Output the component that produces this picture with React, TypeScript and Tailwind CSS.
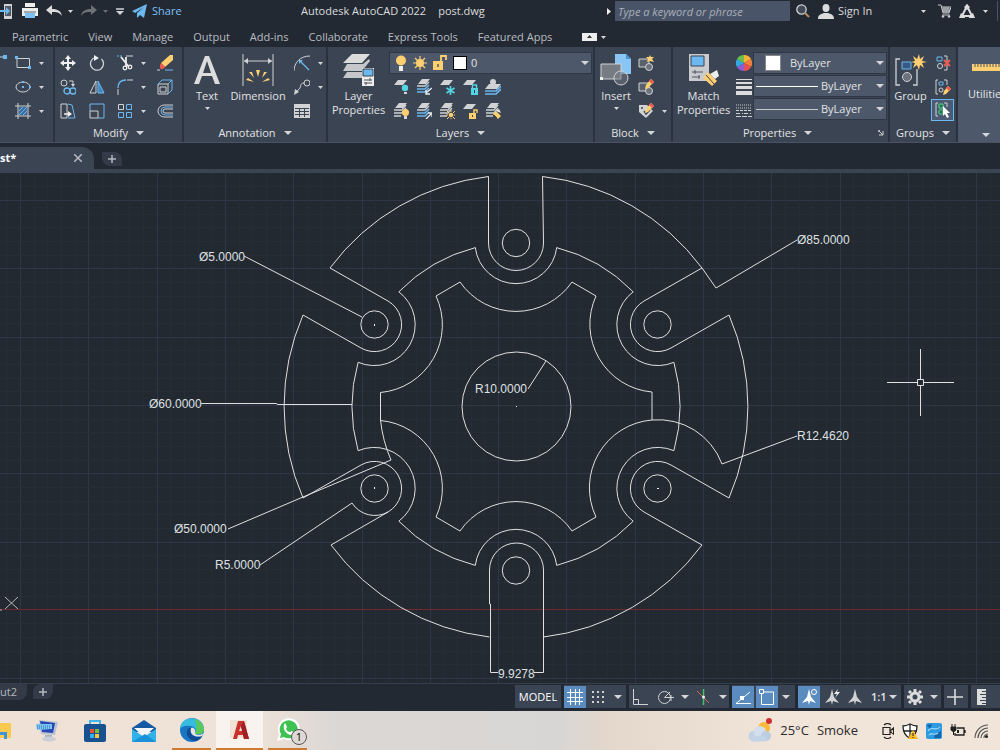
import React from 'react';

type IconProps = { w?: number; h?: number; className?: string; children: React.ReactNode };

const Icon: React.FC<IconProps> = ({ w = 16, h = 16, className = '', children }) => (
  <svg width={w} height={h} viewBox={`0 0 ${w} ${h}`} fill="none" className={`shrink-0 ${className}`} aria-hidden="true">
    {children}
  </svg>
);

const Caret: React.FC<{ small?: boolean; className?: string }> = ({ small, className = '' }) => (
  <Icon w={small ? 5 : 8} h={small ? 3 : 4} className={className}>
    <path d={small ? 'M0 0H5L2.5 3Z' : 'M0 0H8L4 4Z'} fill="#d4d6d9" />
  </Icon>
);

const G = '#d0d2d4';
const B = '#6cb8f0';
const Y = '#ffcf70';

const ribbonTabs = ['Parametric', 'View', 'Manage', 'Output', 'Add-ins', 'Collaborate', 'Express Tools', 'Featured Apps'];

const drawTools = [
  {
    name: 'Rectangle',
    icon: <><path d="M2 3.500H14.500V12.500H2Z" stroke={G} /><path d="M0 1H3V4H0ZM13 11H16V14H13Z" fill={B} /></>,
  },
  {
    name: 'Ellipse',
    icon: <><ellipse cx="8" cy="8" rx="7" ry="5" stroke={G} /><path d="M7 7H9V9H7ZM7 2H9V4H7ZM14 7H16V9H14Z" fill={B} /></>,
  },
  {
    name: 'Hatch',
    icon: <><path d="M3 0V16M13 0V16M0 3H16M0 13H16" stroke={G} /><path d="M4 4H12V12H4Z" fill="#3d6d9c" /><path d="M4 8L8 4M4 12L12 4M8 12L12 8" stroke={B} /></>,
  },
];

const modifyTools = [
  {
    name: 'Move',
    icon: <><path d="M8 2V14M2 8H14" stroke="#eee" strokeWidth="2" /><path d="M8 0L11 4H5ZM8 16L11 12H5ZM0 8L4 5V11ZM16 8L12 5V11Z" fill="#eee" /></>,
  },
  {
    name: 'Rotate',
    icon: <><path d="M12.500 4A6.500 6.500 0 1 1 6 2.500" stroke={G} strokeWidth="1.3" /><path d="M5 0L10 3L5 6Z" fill="#eee" /></>,
  },
  {
    name: 'Trim',
    more: true,
    icon: <><path d="M0 1H6" stroke={B} strokeDasharray="2 1" /><path d="M9 1H16" stroke={G} /><path d="M4 2L12 12M9 2V12" stroke="#eee" strokeWidth="1.8" /><circle cx="8" cy="13" r="1.8" stroke="#eee" strokeWidth="1.3" /><circle cx="13" cy="12" r="1.8" stroke="#eee" strokeWidth="1.3" /></>,
  },
  {
    name: 'Erase',
    icon: <><path d="M16 0V5L8 12L4 8L13 0Z" fill={Y} /><path d="M4 8L8 12C6 15 3 15 3 12C3 10 3 9 4 8Z" fill="#ee5a50" /><path d="M0 15H3" stroke={G} /><path d="M8 15H16" stroke={B} /></>,
  },
  {
    name: 'Copy',
    icon: <><circle cx="4" cy="4" r="3" stroke={G} /><path d="M9 2H13V6" stroke={G} /><path d="M11 5H15L13 8Z" fill={G} /><circle cx="7" cy="12" r="3" stroke={B} strokeWidth="1.3" /><circle cx="13" cy="12" r="3" stroke={B} strokeWidth="1.3" /></>,
  },
  {
    name: 'Mirror',
    icon: <><path d="M7 2V14H1Z" stroke={G} /><path d="M9 2V14H15Z" fill="#4386bd" stroke={B} /></>,
  },
  {
    name: 'Fillet',
    more: true,
    icon: <><path d="M1 16V10M10 1H16" stroke={G} /><path d="M1 9C1 4 4 1 9 1" stroke={B} strokeWidth="1.3" /></>,
  },
  {
    name: 'Explode',
    icon: <><path d="M1 5H11V15H1ZM3 8H9V13H3Z" stroke={G} /><path d="M1 5L5 1H15V11L11 15M11 5L15 1" stroke={B} /></>,
  },
  {
    name: 'Stretch',
    icon: <><path d="M1 1H7V15H1Z" stroke={G} /><path d="M8 1L12 2L15 15H8" stroke={B} /><path d="M4 11H9" stroke="#eee" strokeWidth="1.5" /><path d="M8 8L12 11L8 14Z" fill="#eee" /></>,
  },
  {
    name: 'Scale',
    icon: <><path d="M1 8V1H15V15H9" stroke={B} /><path d="M1 8H9V15H1Z" stroke={G} /></>,
  },
  {
    name: 'Array',
    more: true,
    icon: <><path d="M1.500 1.500H6.500V6.500H1.500Z" stroke={G} /><path d="M9.500 1.500H14.500V6.500H9.500ZM1.500 9.500H6.500V14.500H1.500ZM9.500 9.500H14.500V14.500H9.500Z" stroke={B} /></>,
  },
  {
    name: 'Offset',
    icon: <><path d="M16 2H7A6 6 0 0 0 7 14H16" stroke={G} /><path d="M16 4H8A4 4 0 0 0 8 12H16" stroke={B} /><path d="M16 6H8A2 2 0 0 0 8 10H16" stroke={G} /></>,
  },
];

const sheet = <path d="M5 1H14L10 6H1Z" fill={G} />;
const stack = <><path d="M6 0H14L10 5H2Z" fill={G} /><path d="M1 7H9L13 2M1 10H9L13 5M1 13H8" stroke={G} strokeWidth="1.3" /></>;
const stackBlue = <><path d="M6 0H14L10 5H2Z" fill={G} /><path d="M1 7H9L13 3" stroke={G} strokeWidth="1.3" /><path d="M1 10H9L13 6M1 13H9L13 9" stroke={B} strokeWidth="1.5" /></>;

const layerTools = [
  { name: 'Off', icon: <>{sheet}<circle cx="12" cy="9" r="3.2" fill="#54d5e4" /><path d="M11 13H14V15H11Z" fill={G} /></> },
  { name: 'Isolate', icon: <>{stackBlue}<path d="M16 9L10 14M10 11V15H14" stroke="#eee" strokeWidth="1.3" /></> },
  { name: 'Freeze', icon: <>{sheet}<path d="M11.500 7V16M7.500 9L15.500 14M7.500 14L15.500 9" stroke="#54d5e4" strokeWidth="1.6" /></> },
  { name: 'Lock', icon: <>{sheet}<path d="M9 9H16V16H9Z" fill="#54d5e4" /><path d="M10.500 9V6H14.500V9" stroke="#54d5e4" strokeWidth="1.4" /><path d="M12.500 11V14" stroke="#345" /></> },
  { name: 'Make Current', icon: <><path d="M4 5H16L12 10H0Z" fill={G} /><circle cx="8" cy="3" r="3" fill={G} /><path d="M0 12H11L16 7M0 15H11L16 10" stroke={B} strokeWidth="1.6" /></> },
  { name: 'Turn All On', icon: <>{stack}<circle cx="12.500" cy="9.500" r="3.5" fill={Y} /><path d="M11 13H14V16H11Z" fill={G} /></> },
  { name: 'Unisolate', icon: <>{stackBlue}<path d="M10 16L15 11M12 10H16V14" stroke="#eee" strokeWidth="1.3" /></> },
  { name: 'Thaw', icon: <>{stack}<circle cx="12" cy="12" r="2.3" fill={Y} /><path d="M12 7V9M12 15V16M7 12H9M15 12H16M8 8L10 10M16 8L14 10M8 16L10 14M14 14L16 16" stroke={Y} /></> },
  { name: 'Unlock', icon: <>{sheet}<path d="M7 10H14V16H7Z" fill={Y} /><path d="M12 10V7H15V10" stroke={Y} strokeWidth="1.4" /><path d="M10.500 12V14" stroke="#543" /></> },
  { name: 'Match Layer', icon: <>{stack}<path d="M8 11L11 8L16 13L13 16Z" fill={Y} /><path d="M9 12L12 15" stroke="#5a4630" /><path d="M11 8L14 6L16 10Z" fill="#eee" /></> },
];

// lower-right overlays shared by the block buttons
const blockBase = <><path d="M1 4H11V12H1Z" stroke={G} fill="#5b616c" /><circle cx="11" cy="12" r="3.500" fill="#6d727b" stroke={G} /></>;
const pencil = <><path d="M13 0L16 3L10 9L7 10L8 6Z" fill={Y} /><path d="M13 0L16 3L14 5L11 2Z" fill="#ee5a50" /></>;

const blockTools = [
  { name: 'Create Block', icon: <>{blockBase}<path d="M12 0L13 2L16 2L14 4L16 7L12 6L9 7L10 4L8 2L11 2Z" fill={Y} /></> },
  { name: 'Edit Block', icon: <>{blockBase}{pencil}</> },
  { name: 'Edit Attributes', icon: <><path d="M1 2H9L15 8L8 15L1 9Z" fill={G} /><circle cx="4" cy="5" r="1" fill="#3b4453" /><path d="M6 8L8 11L12 7" stroke="#3b4453" strokeWidth="1.5" />{pencil}</> },
];

const Panel: React.FC<{ title: string; className?: string; launcher?: boolean; children: React.ReactNode }> = ({ title, className = '', launcher, children }) => (
  <section className={`flex shrink-0 flex-col border-r-2 border-[#2b323f] ${className}`}>
    <div className="flex h-[77px] pt-1">{children}</div>
    <div className="flex h-[18px] items-center px-1">
      <button className="flex flex-1 items-center justify-center gap-2 whitespace-nowrap">
        {title}
        {title && <Caret />}
      </button>
      {launcher && (
        <button aria-label="Properties settings">
          <Icon w={6} h={6}><path d="M0 1H2M1 0V2M1 1L5 5M5 1V5H1" stroke={G} /></Icon>
        </button>
      )}
    </div>
  </section>
);

const ToolButton: React.FC<{ name: string; more?: boolean; children: React.ReactNode }> = ({ name, more, children }) => (
  <button aria-label={name} className="flex h-6 items-center gap-2">
    <Icon>{children}</Icon>
    {more && <Caret small />}
  </button>
);

const BigButton: React.FC<{ label: string[]; more?: boolean; className?: string; children: React.ReactNode }> = ({ label, more, className = '', children }) => (
  <button className={`flex shrink-0 flex-col items-center ${className}`}>
    <span className="flex h-[38px] items-center">{children}</span>
    {label.map((line) => (
      <span key={line} className="leading-[14px]">{line}</span>
    ))}
    {more && <Caret small className="mt-1" />}
  </button>
);

const TitleBar: React.FC = () => (
  <header className="flex h-[25px] items-center overflow-hidden pb-[3px] text-[#dcdcdc]">
    <div className="flex w-[301px] shrink-0 items-center">
      <button aria-label="Save to mobile">
        <Icon w={14} h={18}><path d="M4 2H12V17H4Z" fill="#cfd1d3" /><path d="M5 4H11V14H5Z" fill="#535b68" /><path d="M0 9H8" stroke={B} strokeWidth="2" /><path d="M6 5L10 9L6 13Z" fill={B} /></Icon>
      </button>
      <button aria-label="Plot" className="ml-2">
        <Icon w={16} h={16}><path d="M3 0H13V4H3Z" fill="#eee" /><path d="M0 5H16V13H0Z" fill="#eee" /><path d="M3 10H13V15H3Z" fill="#7cc0f5" /><path d="M2 9H14" stroke="#59616c" /></Icon>
      </button>
      <button aria-label="Undo" className="ml-2 flex items-center gap-1.5">
        <Icon w={16} h={12}><path d="M0 5L6 0V4C12 4 15 6 16 11C13 7 11 7 6 7V10Z" fill="#dcdcdc" /></Icon>
        <Caret small />
      </button>
      <button aria-label="Redo" className="ml-2 flex items-center gap-1.5 opacity-40">
        <Icon w={16} h={12}><path d="M16 5L10 0V4C4 4 1 6 0 11C3 7 5 7 10 7V10Z" fill="#dcdcdc" /></Icon>
        <Caret small />
      </button>
      <button aria-label="Customize toolbar" className="ml-2">
        <Icon w={8} h={7}><path d="M0 1H8" stroke={G} strokeWidth="1.5" /><path d="M0 3H8L4 7Z" fill={G} /></Icon>
      </button>
      <button className="ml-2 flex items-center gap-1 text-[#7cc0f5]">
        <Icon w={16} h={14}><path d="M0 7L15 0L12 14L8 11L5 14V9L12 3L3 9Z" fill="#6cb8f0" /></Icon>
        Share
      </button>
    </div>
    <h1 className="flex gap-3 whitespace-nowrap">
      <span>Autodesk AutoCAD 2022</span>
      <span>post.dwg</span>
    </h1>
    <div className="flex-1" />
    <div className="flex shrink-0 items-center">
      <Icon w={4} h={7} className="mr-1"><path d="M0 0L4 3.500L0 7Z" fill="#eee" /></Icon>
      <input
        aria-label="Search"
        placeholder="Type a keyword or phrase"
        className="h-5 w-[175px] bg-[#4a5468] px-[3px] italic placeholder:text-[#a9afb9]"
      />
      <button aria-label="Find" className="ml-1.5">
        <Icon w={14} h={14}><circle cx="5.500" cy="5.500" r="4.700" stroke={G} strokeWidth="1.300" fill="#414a56" /><path d="M9 9L13 13" stroke="#b98d62" strokeWidth="2" /></Icon>
      </button>
      <button className="ml-2 flex w-[108px] items-center justify-between">
        <span className="flex items-center gap-1">
          <Icon w={16} h={15}><ellipse cx="8" cy="4" rx="3.500" ry="4" fill="#dcdcdc" /><path d="M0 15C0 10 4 10 6 9H10C12 10 16 10 16 15Z" fill="#dcdcdc" /></Icon>
          Sign In
        </span>
        <Caret small />
      </button>
      <button aria-label="App store" className="ml-3">
        <Icon w={13} h={14}><path d="M0 1H3L5 9H11L13 3H3M4 5H12M4 7H12M6 3V9M8 3V9M10 3V9" stroke="#c5c7ca" /><path d="M4 11H12" stroke="#c5c7ca" /><circle cx="5" cy="12.500" r="1.300" fill="#c5c7ca" /><circle cx="11" cy="12.500" r="1.300" fill="#c5c7ca" /></Icon>
      </button>
      <button aria-label="Autodesk App" className="ml-2 mr-[9px] flex items-center gap-2">
        <Icon w={16} h={15}><path d="M8 2L3 12H13Z" stroke="#dcdcdc" strokeWidth="2" /><path d="M8 0L11 3L8 6L5 3ZM0 14L2 9L6 12V14ZM16 14L14 9L10 12V14Z" fill="#dcdcdc" /></Icon>
        <Caret small />
      </button>
      <span className="mr-[2px] h-5 w-px bg-[#4a5468]" />
    </div>
  </header>
);

const comboClass = 'flex items-center border border-[#2f3745] bg-[#4d586b] pr-[2px]';

const Ribbon: React.FC = () => (
  <div className="flex h-[96px] overflow-hidden border-b border-[#495365] bg-[#3b4453] text-[#e2e3e4]">
    <Panel title="" className="w-[55px]">
      <Icon w={8} h={8} className="mt-1"><path d="M0 2H4" stroke={G} /><path d="M3 0H7V4H3Z" fill={B} /></Icon>
      <div className="ml-[7px] flex flex-col">
        {drawTools.map((tool) => (
          <ToolButton key={tool.name} name={tool.name} more>{tool.icon}</ToolButton>
        ))}
      </div>
    </Panel>

    <Panel title="Modify" className="w-[129px]">
      <div className="grid h-[72px] grid-cols-[29px_28px_40px_20px] pl-[5px]">
        {modifyTools.map((tool) => (
          <ToolButton key={tool.name} name={tool.name} more={tool.more}>{tool.icon}</ToolButton>
        ))}
      </div>
    </Panel>

    <Panel title="Annotation" className="w-[144px]">
      <BigButton label={['Text']} more className="w-[46px]">
        <Icon w={26} h={28}><path fillRule="evenodd" d="M0 28L11 0H15L26 28H21L18 20H8L5 28ZM9 17H17L13 5Z" fill="#dcdcdc" /></Icon>
      </BigButton>
      <BigButton label={['Dimension']} className="w-[56px]">
        <Icon w={32} h={32}>
          <path d="M1 0V32M31 0V32M2 7H30" stroke={G} />
          <path d="M2 7L6 4V10ZM30 7L26 4V10Z" fill={G} />
          <path d="M14 16H18L16 23ZM7 18L10 18L12 24ZM25 18L22 18L20 24ZM4 26L6 24L12 28ZM28 26L26 24L20 28Z" fill={Y} />
        </Icon>
      </BigButton>
      <div className="ml-2 flex flex-col">
        <ToolButton name="Leader arc" more><path d="M0 16C0 8 6 1 16 1" stroke={G} /><path d="M6 6L15 15" stroke={B} strokeWidth="1.3" /><path d="M5 5H9L5 9Z" fill={B} /></ToolButton>
        <ToolButton name="Multileader" more><circle cx="13" cy="4" r="3" stroke={G} /><path d="M10 4C5 4 8 9 4 11L2 14" stroke={G} /><path d="M0 16L1 10L5 13Z" fill={G} /></ToolButton>
        <ToolButton name="Table"><path d="M0 1H16V15H0Z" fill={G} /><path d="M1 5.500H15M1 8.500H15M1 11.500H15M5.500 5V14M10.500 5V14" stroke="#3b4453" /></ToolButton>
      </div>
    </Panel>

    <Panel title="Layers" className="w-[267px]">
      <BigButton label={['Layer', 'Properties']} className="w-[61px]">
        <Icon w={32} h={32}>
          <path d="M9 0H27L19 9H0Z" fill="#dcdcdc" />
          <path d="M4 10H20L26 5L27 7L19 17H0ZM4 18H20V24H0Z" fill="#c5c7ca" />
          <path d="M19 14H31V32H19Z" fill="#eee" /><path d="M20 15H30V22H20Z" fill="#6cb8f0" stroke="#36404e" />
          <path d="M21 26H29M21 29H29M27 24V27M23 28V31" stroke="#555" />
        </Icon>
      </BigButton>
      <div className="flex flex-col gap-px pt-px">
        <label className={`${comboClass} h-[22px] w-[203px] gap-[6px] pl-[5px]`}>
          <Icon w={12} h={16}><circle cx="6" cy="5.500" r="5" fill={Y} /><path d="M4 11H8V16H4Z" fill="#eee" /></Icon>
          <Icon w={14} h={14}><circle cx="7" cy="7" r="4" fill={Y} /><path d="M7 0V14M0 7H14M2 2L12 12M12 2L2 12" stroke={Y} strokeWidth="1.200" /></Icon>
          <Icon w={14} h={16}><path d="M0 6H10V15H0Z" fill={Y} /><path d="M8 6V1H13V5" stroke={Y} strokeWidth="1.800" /><path d="M5 9V12" stroke="#4d586b" strokeWidth="1.500" /></Icon>
          <span className="h-[14px] w-[14px] shrink-0 border border-black bg-white" />
          <select aria-label="Layer" className="-ml-[2px] min-w-0 flex-1 appearance-none bg-transparent"><option>0</option></select>
          <Caret />
        </label>
        <div className="grid grid-cols-[23px_23px_23px_23px_23px] pl-1">
          {layerTools.map((tool) => (
            <ToolButton key={tool.name} name={tool.name}>{tool.icon}</ToolButton>
          ))}
        </div>
      </div>
    </Panel>

    <Panel title="Block" className="w-[78px]">
      <BigButton label={['Insert']} more className="w-[42px]">
        <Icon w={32} h={32}>
          <path d="M15 0H26L31 5V20H15Z" fill="#8ac6f5" /><path d="M26 0V5H31Z" fill="#4a94cc" />
          <path d="M1 10H21V25H1Z" fill="#777b84" stroke={G} /><circle cx="21" cy="24" r="7" fill="#777b8480" stroke={G} />
          <path d="M0 23H3V26H0Z" fill="#eee" />
        </Icon>
      </BigButton>
      <div className="ml-px flex flex-col">
        {blockTools.map((tool, index) => (
          <ToolButton key={tool.name} name={tool.name} more={index === 2}>{tool.icon}</ToolButton>
        ))}
      </div>
    </Panel>

    <Panel title="Properties" className="w-[217px]" launcher>
      <BigButton label={['Match', 'Properties']} className="w-[61px]">
        <Icon w={32} h={32}>
          <path d="M1 0H21V27H1Z" fill="#c9cbce" /><path d="M3 2H16V12H3Z" fill="#6cb8f0" stroke="#3b4453" />
          <path d="M4 18H15M4 23H12M7 16V20M11 21V25" stroke="#4c5563" />
          <path d="M15 24L20 18L29 27L24 32Z" fill={Y} /><path d="M18 21L26 30M21 18L29 26" stroke="#3b4453" /><path d="M22 20L29 16L31 22L27 25Z" fill="#eee" />
        </Icon>
      </BigButton>
      <div className="flex w-[19px] flex-col items-center">
        <span className="flex h-6 items-center">
          <Icon>
            <path d="M8 8V0A8 8 0 0 1 15 4Z" fill="#f9b233" /><path d="M8 8L15 4A8 8 0 0 1 15 12Z" fill="#f2803a" />
            <path d="M8 8L15 12A8 8 0 0 1 8 16Z" fill="#e8504f" /><path d="M8 8V16A8 8 0 0 1 1 12Z" fill="#8b5cd6" />
            <path d="M8 8L1 12A8 8 0 0 1 1 4Z" fill="#34a8e0" /><path d="M8 8L1 4A8 8 0 0 1 8 0Z" fill="#6cc04a" />
          </Icon>
        </span>
        <span className="flex h-6 items-center"><Icon><path d="M0 0H16V1H0ZM0 3H16V5H0ZM0 7H16V10H0ZM0 12H16V16H0Z" fill="#dcdcdc" /></Icon></span>
        <span className="flex h-6 items-center">
          <Icon><path d="M0 2H16M0 5H16" stroke={G} strokeDasharray="1 1" /><path d="M0 7.500H16" stroke={G} strokeDasharray="3 1" /><path d="M0 10.500H16" stroke={G} strokeDasharray="4 2 1 1" /><path d="M0 13.500H16" stroke={G} strokeDasharray="5 1" /></Icon>
        </span>
      </div>
      <div className="flex flex-col gap-px pt-px">
        <label className={`${comboClass} h-[22px] w-[134px] pl-[11px]`}>
          <span className="mr-[9px] h-4 w-4 shrink-0 border border-[#888] bg-white" />
          <select aria-label="Object color" className="min-w-0 flex-1 appearance-none bg-transparent"><option>ByLayer</option></select>
          <Caret />
        </label>
        <label className={`${comboClass} h-[22px] w-[134px] pl-[2px]`}>
          <span className="mr-[3px] h-px w-[62px] shrink-0 bg-white" />
          <select aria-label="Lineweight" className="min-w-0 flex-1 appearance-none bg-transparent"><option>ByLayer</option></select>
          <Caret />
        </label>
        <label className={`${comboClass} h-[22px] w-[134px] pl-[2px]`}>
          <span className="mr-[3px] h-px w-[62px] shrink-0 bg-[#c5c8cc]" />
          <select aria-label="Linetype" className="min-w-0 flex-1 appearance-none bg-transparent"><option>ByLayer</option></select>
          <Caret />
        </label>
      </div>
    </Panel>

    <Panel title="Groups" className="w-[68px]">
      <BigButton label={['Group']} className="w-[41px]">
        <Icon w={32} h={32}>
          <path d="M5 5H1V31H5M18 31H22V15" stroke={G} strokeWidth="1.300" /><path d="M7 8H16V15H7Z" fill="#365a82" stroke={B} />
          <circle cx="12" cy="23" r="4.500" fill="#6d727b" stroke={G} />
          <path d="M24 0L25 5L29 2L27 7L32 8L27 9L29 14L25 11L24 16L22 11L18 14L20 9L16 8L20 7L18 2L22 5Z" fill={Y} />
        </Icon>
      </BigButton>
      <div className="flex flex-col">
        <button aria-label="Ungroup" className="flex h-6 w-[23px] items-center justify-center">
          <Icon><path d="M2 2H7V6H2Z" stroke={B} /><circle cx="5" cy="11" r="2.500" stroke={G} /><path d="M9 1H12V15H9" stroke={G} /><path d="M9 5L15 11M15 5L9 11" stroke="#ee5a50" strokeWidth="2" /></Icon>
        </button>
        <button aria-label="Group edit" className="flex h-6 w-[23px] items-center justify-center">
          <Icon><path d="M3 1H1V15H3M9 1H12V6" stroke={G} /><path d="M4 3H8V6H4Z" stroke={B} /><circle cx="6" cy="11" r="2" stroke={G} /><path d="M13 7L16 10L11 15L8 16L9 12Z" fill={Y} /><path d="M13 7L16 10L14 12L11 9Z" fill="#ee5a50" /></Icon>
        </button>
        <button aria-label="Group selection" className="flex h-[22px] w-[23px] items-center justify-center border border-[#6cb8f0] bg-[#4a5b73]">
          <Icon><path d="M3 1H1V14H3M9 1H12V5" stroke={G} /><path d="M4 2H8V6H4Z" fill="#2c6e56" stroke="#54d58a" /><circle cx="6" cy="10" r="2.300" fill="#2c6e56" stroke="#54d58a" /><path d="M8 4L15 11H12L14 15L12 16L10 12L8 14Z" fill="#fff" /></Icon>
        </button>
      </div>
    </Panel>

    <button className="flex min-w-[80px] flex-1 flex-col items-start bg-[#4d586b] pl-[10px] pt-[17px]">
      <Icon w={48} h={8} className="ml-1"><path d="M0 0H48V7H0Z" fill={Y} /><path d="M3 0V3M6 0V3M9 0V3M12 0V3M15 0V3M18 0V3M21 0V3M24 0V3M27 0V3M30 0V3" stroke="#4d586b" /></Icon>
      <span className="mt-[14px]">Utilities</span>
      <Caret className="ml-[14px] mt-[31px]" />
    </button>
  </div>
);

const FileTabs: React.FC = () => (
  <nav className="flex h-[30px] items-end border-b-4 border-[#3b4453] pt-1 text-white">
    <div className="flex h-full w-[94px] items-center justify-between overflow-hidden rounded-tr-xl bg-[#3b4453] pr-3">
      <button className="font-bold">st*</button>
      <button aria-label="Close drawing"><Icon w={8} h={8}><path d="M0 0L8 8M8 0L0 8" stroke="#b5b8bd" strokeWidth="1.500" /></Icon></button>
    </div>
    <button aria-label="New drawing" className="mb-[3px] ml-2 flex h-[14px] w-5 items-center justify-center rounded-bl-lg rounded-tr-lg bg-[#333b49]">
      <Icon w={8} h={8}><path d="M4 0V8M0 4H8" stroke="#b5b8bd" strokeWidth="1.500" /></Icon>
    </button>
  </nav>
);

const gridStep = 13.66;
const axisRow = 30;
const gridLines = Array.from({ length: 150 }, (_, i) => i - 1);

const dimensions = [
  { text: 'Ø5.0000', x: 199, y: 261 },
  { text: 'Ø85.0000', x: 797, y: 244 },
  { text: 'Ø60.0000', x: 149, y: 408 },
  { text: 'R10.0000', x: 475, y: 393 },
  { text: 'R12.4620', x: 797, y: 440 },
  { text: 'Ø50.0000', x: 174, y: 533 },
  { text: 'R5.0000', x: 215, y: 569 },
  { text: '9.9278', x: 498, y: 678 },
];

const holes = [[516, 243], [374.5, 324.5], [657.5, 324.5], [374.5, 488.5], [657.5, 488.5], [516, 570.5]];

const DrawingCanvas: React.FC = () => (
  <main className="h-[510px] overflow-hidden bg-[#222930]">
    <svg className="h-full w-full" role="img" aria-label="Drawing post.dwg">
      <g transform="translate(0 -173)" fill="none">
        {/* Grid */}
        <g shapeRendering="crispEdges">
          {gridLines.map((i) => (
            <g key={i} stroke={i % 5 === 0 ? '#2f3648' : '#262d37'}>
              <path d={`M${Math.round(20 + i * gridStep) + 0.5} 173V690`} />
              {i < 40 && i !== axisRow && <path d={`M0 ${Math.round(200 + i * gridStep) + 0.5}H2000`} />}
            </g>
          ))}
          <rect x="0" y="609" width="2000" height="1" fill="#702a2e" />
        </g>

        <g stroke="#dfe0e1">
          {/* Outer rim and slots */}
          <path d="M488.500 176.500V243A27 27 0 0 0 543.500 243L542.500 176.500A231 231 0 0 1 702 268L644 301A27 27 0 0 0 671 348L729 315A231 231 0 0 1 729 498L671 465A27 27 0 0 0 644 512L702 545A231 231 0 0 1 543.500 637" />
          <path d="M488.500 176.500A231 231 0 0 0 330 268L388 301A27 27 0 0 1 361 348L303 315A231 231 0 0 0 303 498L361 465A27 27 0 0 1 388 512L331 545A231 231 0 0 0 489.500 637" />
          <path d="M498 672.500H490.500V604H489.500V570A27 27 0 0 1 543.500 570V672.500H534" />
          {/* Middle ring */}
          <path d="M398.800 291.800A164 164 0 0 1 475.300 247.600A41 41 0 0 0 556.700 247.600A164 164 0 0 1 633.200 291.800A41 41 0 0 0 673.900 362.300A164 164 0 0 1 673.900 450.700A41 41 0 0 0 633.200 521.200A164 164 0 0 1 556.700 565.400A41 41 0 0 0 475.300 565.400A164 164 0 0 1 398.800 521.200A41 41 0 0 0 358.100 450.700A164 164 0 0 1 358.100 362.300A41 41 0 0 0 398.800 291.800" />
          {/* Inner star */}
          <path d="M460 282A68 68 0 0 0 572 282L596 296A68 68 0 0 0 652 392V420A68 68 0 0 0 596 517L572 531A68 68 0 0 0 460 531L436 517A68 68 0 0 0 380.500 420.500V392.500A68 68 0 0 0 436 296Z" />
          <circle cx="516.500" cy="406.500" r="54.500" />
          {holes.map(([cx, cy]) => (
            <circle key={`${cx}-${cy}`} cx={cx} cy={cy} r="13.700" />
          ))}
          {/* Dimension leaders */}
          <path d="M244 256L362 317M797 240L716 288L702 268M201 403.500H276L278 404.500H352M528 389L546 361" />
          <path d="M797 436L722 464A68 68 0 0 0 652 420M228 529L303 497L391 460A136 136 0 0 1 380.500 420M260 565L352 503A27 27 0 0 0 388 512" />
          <path d="M887 382.500H917M924 382.500H954M920.500 349V379M920.500 386V416M917.500 379.500H923.500V385.500H917.500Z" />
          <path d="M5 597L18 609M18 597L5 609M0 610H2" stroke="#b5b8bc" />
        </g>
        <path d="M374 324H375V326H374ZM374 487H375V489H374ZM657 488H659V489H657ZM516 406H517V407H516Z" fill="#eee" />
        <g fill="#dfe0e1" fontFamily="Liberation Sans, Arial, sans-serif" fontSize="12">
          {dimensions.map((d) => (
            <text key={d.text} x={d.x} y={d.y}>{d.text}</text>
          ))}
        </g>
      </g>
    </svg>
  </main>
);

const StatusGroup: React.FC<{ className?: string; children: React.ReactNode }> = ({ className = '', children }) => (
  <div className={`flex h-[23px] shrink-0 items-center bg-[#3b4453] ${className}`}>{children}</div>
);

const StatusButton: React.FC<{ name: string; active?: boolean; children: React.ReactNode }> = ({ name, active, children }) => (
  <button aria-label={name} aria-pressed={!!active} className={`flex h-[22px] w-[22px] shrink-0 items-center justify-center ${active ? 'bg-[#5b8cc0]' : ''}`}>
    <Icon>{children}</Icon>
  </button>
);

const person = <path d="M8 0L10 8L15 14L9 12L8 16L7 12L1 14L6 8Z" />;

const StatusBar: React.FC = () => (
  <footer className="flex h-7 items-start justify-between border-t border-[#353e4c] text-[#e2e3e4]">
    <div className="flex h-4 shrink-0">
      <button className="w-[27px] rounded-br-lg bg-[#333b49] text-left leading-4 text-[#b5b8bd]">ut2</button>
      <button aria-label="New layout" className="ml-1.5 flex h-[15px] w-5 items-center justify-center rounded-br-lg rounded-tl-lg bg-[#333b49]">
        <Icon w={8} h={8}><path d="M4 0V8M0 4H8" stroke="#b5b8bd" strokeWidth="1.500" /></Icon>
      </button>
    </div>
    <div className="flex w-[485px] shrink-0 gap-[3px] overflow-hidden pt-px">
      <StatusGroup className="w-[46px] justify-center"><button className="text-white">MODEL</button></StatusGroup>
      <StatusGroup className="w-[62px] gap-px">
        <StatusButton name="Grid" active><path d="M3.500 0V16M8.500 0V16M12.500 0V16M0 3.500H16M0 8.500H16M0 12.500H16" stroke="#fff" /></StatusButton>
        <StatusButton name="Snap"><path d="M2 3H14M2 8H14M2 13H14" stroke={G} strokeWidth="2" strokeDasharray="2 3" /></StatusButton>
        <button aria-label="Snap settings" className="ml-1"><Caret /></button>
      </StatusGroup>
      <StatusGroup className="w-[100px] gap-1">
        <StatusButton name="Ortho"><path d="M1.500 0V15.500H16M1.500 10.500H6.500V15" stroke={G} /></StatusButton>
        <StatusButton name="Polar"><circle cx="6.500" cy="8.500" r="6" stroke={G} /><path d="M6.500 8.500H16M6.500 8.500L12 3M13 6V12" stroke={G} /></StatusButton>
        <button aria-label="Polar settings"><Caret /></button>
        <StatusButton name="Isodraft"><path d="M7.500 0V16" stroke="#3fc26b" strokeWidth="1.500" /><path d="M1 2L13 14" stroke="#d36a55" /><circle cx="7.500" cy="8" r="1.500" fill="#eee" /></StatusButton>
        <button aria-label="Isodraft settings"><Caret /></button>
      </StatusGroup>
      <StatusGroup className="w-[63px] gap-[2px]">
        <StatusButton name="Tracking" active><path d="M15 3L1 14.500H16" stroke="#fff" /><path d="M5 7H9V11H5Z" fill="#fff" /></StatusButton>
        <StatusButton name="Object snap" active><path d="M3 3H14.500V15.500H2.500V4" stroke="#fff" /><path d="M0.500 0.500H4.500V4.500H0.500Z" fill="#5b8cc0" stroke="#fff" /></StatusButton>
        <button aria-label="Object snap settings" className="ml-[2px]"><Caret /></button>
      </StatusGroup>
      <StatusGroup className="w-[103px] gap-px">
        <StatusButton name="Annotation visibility" active><g fill="#fff">{person}</g><circle cx="13" cy="3" r="2.500" stroke="#fff" /></StatusButton>
        <StatusButton name="Auto scale"><g fill={G}>{person}</g><path d="M14 0L10 5H13L11 9L16 3H13Z" fill="#eee" /></StatusButton>
        <StatusButton name="Annotation scale"><g fill={G}>{person}</g></StatusButton>
        <button className="ml-1 flex items-center gap-[2px] font-semibold">1:1 <Caret /></button>
      </StatusGroup>
      <StatusGroup className="w-[37px] gap-1">
        <StatusButton name="Workspace"><circle cx="8" cy="8" r="4" stroke="#dcdcdc" strokeWidth="3" /><path d="M8 0V3M8 13V16M0 8H3M13 8H16M2 2L4 4M12 12L14 14M14 2L12 4M4 12L2 14" stroke="#dcdcdc" strokeWidth="3" /></StatusButton>
        <button aria-label="Workspace settings"><Caret /></button>
      </StatusGroup>
      <StatusGroup className="w-[24px]"><StatusButton name="Monitor"><path d="M8 0V16M0 8H16" stroke="#dcdcdc" strokeWidth="1.600" /></StatusButton></StatusGroup>
      <StatusGroup className="w-[40px]"><StatusButton name="Units"><path d="M3 0H12V16H3Z" fill="#dcdcdc" /><path d="M8 2.500H12M6 5.500H12M8 8.500H12M6 11.500H12M8 14.500H12" stroke="#3b4453" /></StatusButton></StatusGroup>
    </div>
  </footer>
);

const Taskbar: React.FC = () => (
  <div className="flex h-[39px] items-stretch justify-between overflow-hidden bg-[linear-gradient(90deg,#efe1d5_0%,#efe2d8_25%,#dad7d5_34%,#d8d6d4_56%,#e4d7cc_61%,#f1e4d9_78%)] text-[#2b2b2b]">
    <div className="flex">
      <button aria-label="File Explorer" className="flex w-[11px] items-center overflow-hidden">
        <Icon w={11} h={18}><path d="M0 1H11V16H0Z" fill="#fbc94d" /><path d="M0 10H7V17H4V13H0Z" fill="#3f93d8" /></Icon>
      </button>
      <button aria-label="Remote computer" className="flex w-[72px] items-center justify-center">
        <Icon w={24} h={22}><path d="M4 0L23 2L20 15L6 14Z" fill="#b9c3cf" /><path d="M5 1L20 3L18 13L7 12Z" fill="#2846b8" /><path d="M1 4H17V9L2 10Z" fill="#7dc5ef" /><path d="M2 6H16M2 8H16" stroke="#2473b8" strokeDasharray="1 1" /><path d="M10 15H17V18H10Z" fill="#aab4bf" /><ellipse cx="14" cy="19" rx="7" ry="2.500" fill="#c9d0d8" /></Icon>
      </button>
      <button aria-label="Microsoft Store" className="flex w-6 items-center justify-center">
        <Icon w={24} h={24}><path d="M7 6V2H17V6" stroke="#43b6ea" strokeWidth="2" /><rect x="1" y="5" width="22" height="18" rx="2" fill="#17518f" /><path d="M7 10H11V14H7Z" fill="#ef4d3d" /><path d="M12 10H16V14H12Z" fill="#7fba32" /><path d="M7 15H11V19H7Z" fill="#35b3f1" /><path d="M12 15H16V19H12Z" fill="#fdc43f" /></Icon>
      </button>
      <button aria-label="Mail" className="flex w-[73px] items-center justify-center">
        <Icon w={24} h={22}><path d="M0 8L12 0L24 8V12H0Z" fill="#1559a2" /><path d="M2 8H22L12 17Z" fill="#f3f6f8" /><path d="M0 9L12 17L24 9V22H0Z" fill="#2fb1ea" /><path d="M0 22L13 14L24 22Z" fill="#1a92da" /></Icon>
      </button>
      <button aria-label="Edge" className="-ml-2 flex w-[39px] items-center justify-center border-b-2 border-[#cf7a2e]">
        <Icon w={24} h={24}>
          <circle cx="12" cy="12" r="12" fill="#1877c4" />
          <path d="M0 11C1 -2 20 -4 24 10C25 18 16 17 15 15C17 12 15 8 10 8C5 7 1 9 0 11Z" fill="#36bce0" />
          <path d="M14 1C20 2 24 7 24 12C23 17 16 17 15 15C17 12 18 5 14 1Z" fill="#5cc955" />
          <path d="M9 10C4 14 8 23 16 23C20 22 22 19 22 18C15 21 9 17 11 10Z" fill="#0f4c94" />
          <path d="M11 10C9 17 16 20 22 18L24 15C20 18 15 17 15 15C16 12 14 9 11 10Z" fill="#e9e2dc" />
        </Icon>
      </button>
      <button aria-label="AutoCAD" className="ml-[5px] flex w-[47px] items-center justify-center border-b-2 border-[#cf7a2e] bg-[#f8f3ee]">
        <Icon w={20} h={20}><path d="M0 0H17V18H0Z" fill="#f3e1d5" /><path fillRule="evenodd" d="M3 19L8 1H14L19 19H14L13 15H8L7 19ZM9 11H12L11 6Z" fill="#c9302c" /><path d="M14 1L19 19H14L11 6Z" fill="#9e2024" /></Icon>
      </button>
      <button aria-label="WhatsApp, 1 notification" className="relative ml-[5px] flex w-[39px] items-center justify-center border-b-2 border-[#cf7a2e]">
        <Icon w={24} h={24}><path d="M1 23L3 16A11 11 0 1 1 8 21Z" fill="#fff" /><path d="M4 20L5 16A9 9 0 1 1 8 19Z" fill="#3fc251" /><path d="M8 7C8 5 10 5 10 7L11 9L10 11C11 13 12 14 14 14L16 13L18 15C17 18 14 17 12 16C9 14 7 11 8 7Z" fill="#fff" /></Icon>
        <span className="absolute bottom-[3px] right-0 flex h-[16px] w-[16px] items-center justify-center rounded-full border border-[#555] bg-[#ded9d5] text-[11px] text-black">1</span>
      </button>
    </div>

    <div className="flex items-center text-[13px]">
      <button className="flex items-center gap-2 whitespace-nowrap pb-px">
        <Icon w={24} h={24}><circle cx="16" cy="10" r="6" fill="#fbb93c" /><circle cx="21" cy="3" r="3" fill="#cf3030" /><circle cx="6" cy="18" r="5.500" fill="#c3d3e6" /><circle cx="12" cy="14" r="6" fill="#d3dfec" /><circle cx="18" cy="18" r="5" fill="#bccde2" /><path d="M6 18H18V23.500H6Z" fill="#c3d3e6" /></Icon>
        <span>25°C</span>
        <span>Smoke</span>
      </button>
      <button aria-label="Meet now" className="ml-6"><Icon w={12} h={16}><path d="M1 4.500H8V11.500H1ZM8 8L11.500 5V11L8 8M2 2C4 0 7 0 9 2M2 14C4 16 7 16 9 14" stroke="#222" strokeWidth="1.200" /></Icon></button>
      <button aria-label="Security" className="ml-2"><Icon><path d="M8 1C10 2 12 3 15 3C15 9 13 13 8 15C3 13 1 9 1 3C4 3 6 2 8 1Z" fill="#fff" stroke="#222" strokeWidth="1.300" /><path d="M8 1V15M1 8H15" stroke="#222" strokeWidth="1.300" /><path d="M11 7L16 16H6Z" fill="#fbb921" /><path d="M11 10V13M11 14V15" stroke="#222" /></Icon></button>
      <button aria-label="Graphics" className="ml-2"><Icon><rect width="16" height="16" rx="2" fill="#2d9be0" /><path d="M1 2L6 1L4 6ZM9 11L15 8V15H8Z" fill="#1565a8" /><path d="M2 8C5 2 10 9 14 4M3 12C6 9 8 13 12 10" stroke="#9bdcf8" strokeWidth="1.200" /></Icon></button>
      <button aria-label="Battery" className="ml-2"><Icon><path d="M7 5H14V12H5V10M15 7V10" stroke="#222" strokeWidth="1.300" /><path d="M7 7H9V10H7Z" fill="#222" /><path d="M1 4H6V7L3.500 9L1 7ZM2 1V4M5 1V4M3.500 8V12" fill="#222" stroke="#222" /></Icon></button>
      <button aria-label="Network" className="ml-2 mr-3"><Icon w={14} h={14}><path d="M1 14A13 13 0 0 1 14 1M4 14A10 10 0 0 1 14 4M7 14A7 7 0 0 1 14 7M10 14A4 4 0 0 1 14 10" stroke="#555" strokeWidth="1.200" /><circle cx="12.500" cy="12.500" r="1.500" fill="#222" /></Icon></button>
    </div>
  </div>
);

const App: React.FC = () => (
  <div className="flex min-h-screen w-full flex-col overflow-hidden bg-[#222933] font-['Open_Sans','Noto_Sans',sans-serif] text-[11px] leading-4">
    <TitleBar />
    {/* Ribbon tabs */}
    <nav className="flex h-[22px] items-center gap-5 pl-3 pt-[2px] text-[#b9bcc0]">
      {ribbonTabs.map((tab) => (
        <button key={tab} className="whitespace-nowrap">{tab}</button>
      ))}
      <button aria-label="Minimize ribbon" className="ml-2.5 flex items-center gap-1">
        <Icon w={15} h={8}><path d="M0 0H15V8H0Z" fill="#eee" /><path d="M5 5L7.500 2L10 5Z" fill="#333" /></Icon>
        <Caret small />
      </button>
    </nav>
    <Ribbon />
    <FileTabs />
    <DrawingCanvas />
    <StatusBar />
    <Taskbar />
  </div>
);

export default App;
